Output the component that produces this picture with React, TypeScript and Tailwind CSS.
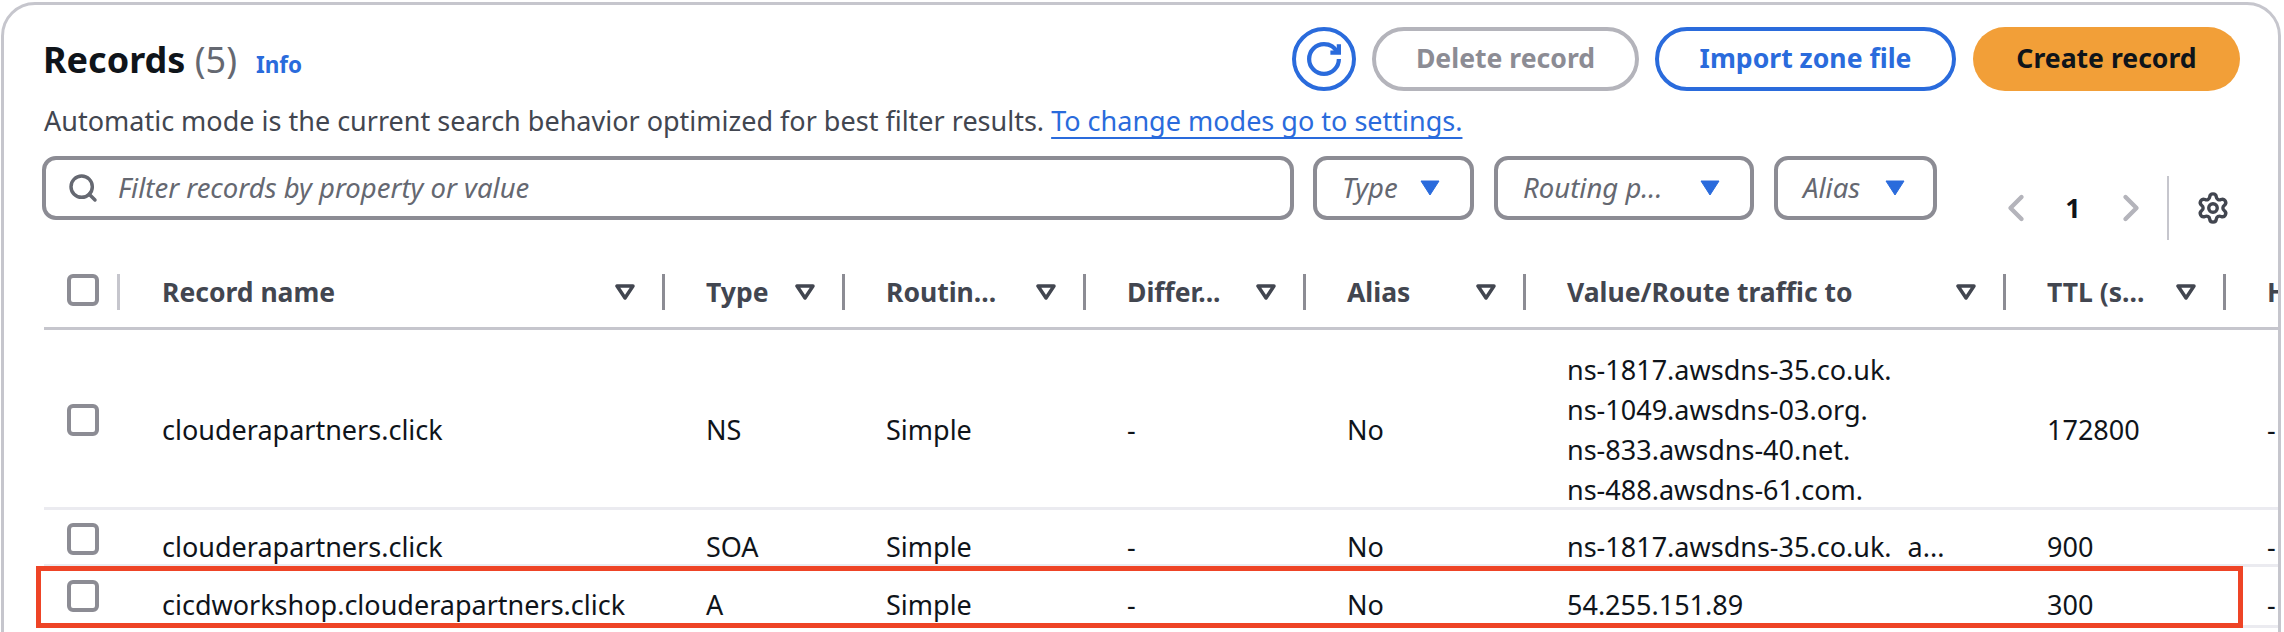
import { ChevronLeft, ChevronRight, Search, Settings } from "lucide-react";

const font = "font-['Noto_Sans',sans-serif]";
const gridCols =
  "grid grid-cols-[76px_545px_180px_241px_220px_220px_480px_220px_200px] w-[2382px]";

const columns = ["Record name", "Type", "Routin...", "Differ...", "Alias", "Value/Route traffic to", "TTL (s..."];

const SortIcon = () => (
  <svg width="20" height="16" viewBox="0 0 20 16" className="shrink-0">
    <path
      d="M2 2h16l-8 12z"
      fill="none"
      stroke="#424650"
      strokeWidth="3.5"
      strokeLinejoin="round"
    />
  </svg>
);

const CaretIcon = () => (
  <svg width="20" height="16" viewBox="0 0 20 16" className="shrink-0">
    <path d="M1 1h18l-9 14z" fill="#2a6bdc" stroke="#2a6bdc" strokeLinejoin="round" />
  </svg>
);

const RefreshIcon = () => (
  <svg width="34" height="34" viewBox="0 0 16 16" fill="none" stroke="#2a6bdc" strokeWidth="2">
    <path d="M15 8c0 3.87-3.13 7-7 7s-7-3.13-7-7 3.13-7 7-7c2.79 0 5.2 1.63 6.33 4" />
    <path d="M15 1v4h-4" />
  </svg>
);

const Checkbox = () => (
  <div className="h-8 w-8 rounded-[6px] border-[4px] border-[#8c8c94] bg-white" />
);

const FilterSelect = ({ label, width, gap }: { label: string; width: string; gap: string }) => (
  <div
    className={`flex h-16 items-center rounded-[14px] border-[4px] border-[#8c8c94] pl-[25px] ${width} ${gap}`}
  >
    <span className="text-[27.5px] text-[#656871] italic">{label}</span>
    <CaretIcon />
  </div>
);

const HeaderRow = () => (
  <div className={`${gridCols} h-[56px] border-b-[3px] border-[#c6c6cd]`}>
    <div className="flex h-9 items-start border-r-[3px] border-[#c6c6cd] pl-[23px]">
      <Checkbox />
    </div>
    {columns.map((label, i) => (
      <div
        key={label}
        className={`flex h-9 items-center justify-between border-r-[3px] border-[#8c8c94] pr-[27px] ${i === 0 ? "pl-[42px]" : "pl-[41px]"}`}
      >
        <span className="text-[26.5px] leading-9 font-bold text-[#424650]">{label}</span>
        <SortIcon />
      </div>
    ))}
    <div className="flex h-9 items-center pl-[41px]">
      <span className="text-[26.5px] leading-9 font-bold text-[#424650]">Health</span>
    </div>
  </div>
);

interface RecordRowProps {
  name: string;
  type: string;
  value: string[];
  ttl: string;
  height: string;
  padding: string;
}

const RecordRow = ({ name, type, value, ttl, height, padding }: RecordRowProps) => {
  const cells = [name, type, "Simple", "-", "No"];
  return (
    <div className={`${gridCols} ${height} border-b-[3px] border-[#ebebf0] text-[27px] leading-10 text-[#0f141a]`}>
      <div className="flex items-center pl-[23px]">
        <Checkbox />
      </div>
      {cells.map((cell, i) => (
        <div key={i} className={`${i === 0 ? "pl-[42px]" : "pl-[41px]"} ${padding}`}>
          <div className="flex h-full items-center">{cell}</div>
        </div>
      ))}
      <div className={`pl-[41px] ${padding}`}>
        <div className="flex h-full flex-col justify-center">
          {value.map((line) => (
            <div key={line} className="shrink-0 [word-spacing:9px]">
              {line}
            </div>
          ))}
        </div>
      </div>
      <div className={`pl-[41px] ${padding}`}>
        <div className="flex h-full items-center">{ttl}</div>
      </div>
      <div className={`pl-[41px] ${padding}`}>
        <div className="flex h-full items-center">-</div>
      </div>
    </div>
  );
};

const App = () => {
  return (
    <div className={`h-[632px] overflow-hidden bg-white pt-[2px] pl-[1px] ${font}`}>
      <div className="h-[700px] w-[2280px] overflow-hidden rounded-t-[34px] border-[3px] border-[#c6c6cd] bg-white pt-[22px]">
        <div className="flex items-start justify-between pr-[38px] pl-[39px]">
          <div className="flex items-baseline pt-[9px]">
            <h1 className="text-[36px] leading-[48px] font-bold text-[#0f141a]">
              Records <span className="font-normal text-[#656871]">(5)</span>
            </h1>
            <span className="ml-[19px] text-[22.5px] font-bold text-[#2a6bdc]">Info</span>
          </div>
          <div className="flex items-center gap-4">
            <div className="flex h-16 w-16 items-center justify-center rounded-full border-[4px] border-[#2a6bdc]">
              <RefreshIcon />
            </div>
            <div className="flex h-16 w-[267px] items-center justify-center rounded-full border-[4px] border-[#b4b4bb] text-[26.6px] font-bold text-[#8c8c94]">
              Delete record
            </div>
            <div className="flex h-16 w-[301px] items-center justify-center rounded-full border-[4px] border-[#2a6bdc] text-[26.6px] font-bold text-[#2a6bdc]">
              Import zone file
            </div>
            <div className="ml-[1px] flex h-16 w-[267px] items-center justify-center rounded-full bg-[#f29f38] text-[26.6px] font-bold text-[#0f141a]">
              Create record
            </div>
          </div>
        </div>

        <p className="mt-[10px] pl-[40px] text-[27px] leading-10 text-[#424650]">
          Automatic mode is the current search behavior optimized for best filter results.{" "}
          <a className="text-[#2a6bdc] underline decoration-2 underline-offset-[6px]">
            To change modes go to settings.
          </a>
        </p>

        <div className="mt-[15px] flex items-start pl-[38px]">
          <div className="flex h-16 w-[1252px] items-center rounded-[14px] border-[4px] border-[#8c8c94] pl-[21px]">
            <Search size={32} strokeWidth={2.6} color="#656871" />
            <span className="ml-[19px] text-[27.5px] text-[#656871] italic">
              Filter records by property or value
            </span>
          </div>
          <div className="ml-[19px] flex gap-5">
            <FilterSelect label="Type" width="w-[161px]" gap="gap-[22px]" />
            <FilterSelect label="Routing p..." width="w-[260px]" gap="gap-[38px]" />
            <FilterSelect label="Alias" width="w-[163px]" gap="gap-[25px]" />
          </div>
          <div className="mt-[20px] ml-[57px] flex h-16 items-center">
            <ChevronLeft size={44} strokeWidth={2.4} color="#b4b4bb" />
            <span className="ml-[23px] w-[24px] text-center text-[27px] font-bold text-[#0f141a]">1</span>
            <ChevronRight size={44} strokeWidth={2.4} color="#b4b4bb" className="ml-[24px]" />
            <div className="ml-[14px] h-16 w-[2px] bg-[#c6c6cd]" />
            <Settings size={34} strokeWidth={2.4} color="#424650" className="ml-[27px]" />
          </div>
        </div>

        <div className="mt-[34px] ml-[32px] overflow-hidden pb-4 pl-2">
          <HeaderRow />
          <RecordRow
            name="clouderapartners.click"
            type="NS"
            value={[
              "ns-1817.awsdns-35.co.uk.",
              "ns-1049.awsdns-03.org.",
              "ns-833.awsdns-40.net.",
              "ns-488.awsdns-61.com.",
            ]}
            ttl="172800"
            height="h-[180px]"
            padding="pt-[20px] pb-0"
          />
          <RecordRow
            name="clouderapartners.click"
            type="SOA"
            value={["ns-1817.awsdns-35.co.uk. a..."]}
            ttl="900"
            height="h-[57px]"
            padding="pt-[17px]"
          />
          <div className="relative">
            <RecordRow
              name="cicdworkshop.clouderapartners.click"
              type="A"
              value={["54.255.151.89"]}
              ttl="300"
              height="h-[61px]"
              padding="pt-[18px]"
            />
            <div className="absolute -top-px -left-2 h-[62px] w-[2207px] border-[5px] border-[#ee4426]" />
          </div>
        </div>
      </div>
    </div>
  );
};

export default App;
